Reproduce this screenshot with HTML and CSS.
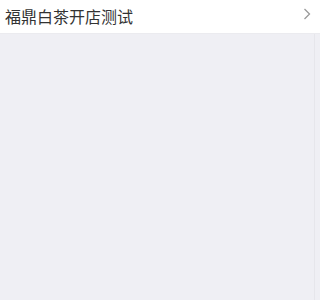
FILE: index.html
```html
<!DOCTYPE html>
<html lang="zh-CN">

<head>
  <meta charset="UTF-8" />
  <meta name="viewport" content="width=device-width, initial-scale=1" />
  <title>店铺</title>
  <link rel="stylesheet" href="styles.css">
</head>

<body>
  <main class="page">
    <a class="shop-row" href="#">
      <span class="shop-name">福鼎白茶开店测试</span>
      <svg class="arrow" width="8" height="12" viewBox="0 0 8 12">
        <polyline points="1.5,1 6.5,6 1.5,11" fill="none" stroke="#9a9a9a" stroke-width="1.3" />
      </svg>
    </a>
  </main>
</body>

</html>
```

FILE: styles.css
```css
* {
  box-sizing: border-box;
}

html,
body {
  margin: 0;
  padding: 0;
  height: 100%;
  background: #efeff4;
  font-family: "Noto Sans CJK SC", "Liberation Sans", sans-serif;
  color: #333;
}

.page {
  height: 100%;
  width: 315px;
  border-right: 1px solid #e6e6eb;
}

.shop-row {
  display: flex;
  align-items: flex-start;
  justify-content: space-between;
  height: 34px;
  padding: 7px 9px 0 5px;
  background: #fff;
  border-bottom: 1px solid #ebebef;
  text-decoration: none;
  color: #333;
  width: 320px;
}

.shop-name {
  font-size: 16px;
  line-height: 18px;
}

.arrow {
  display: block;
  margin-top: 1px;
}
```
